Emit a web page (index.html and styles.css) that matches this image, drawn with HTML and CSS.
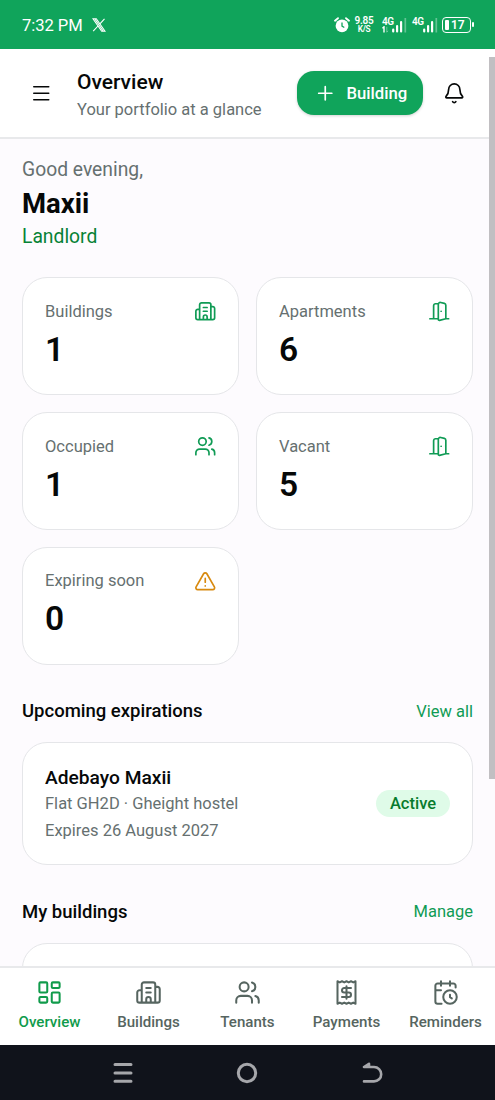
FILE: index.html
```html
<!DOCTYPE html>
<html lang="en">
<head>
<meta charset="utf-8">
<meta name="viewport" content="width=device-width, initial-scale=1">
<title>Overview</title>
<link rel="stylesheet" href="styles.css">
</head>
<body>
<svg class="sprite" aria-hidden="true">
  <symbol id="building" viewBox="0 0 24 24"><path d="M10 12h4M10 8h4M14 21v-3a2 2 0 0 0-4 0v3M6 10H4a2 2 0 0 0-2 2v7a2 2 0 0 0 2 2h16a2 2 0 0 0 2-2V9a2 2 0 0 0-2-2h-2M6 21V5a2 2 0 0 1 2-2h8a2 2 0 0 1 2 2v16"/></symbol>
  <symbol id="door" viewBox="0 0 24 24"><path d="M11 20H2M11 4.562v16.157a1 1 0 0 0 1.242.97L19 20V5.562a2 2 0 0 0-1.515-1.94l-4-1A2 2 0 0 0 11 4.561zM11 4H8a2 2 0 0 0-2 2v14M14 12h.01M22 20h-3"/></symbol>
  <symbol id="users" viewBox="0 0 24 24"><path d="M16 21v-2a4 4 0 0 0-4-4H6a4 4 0 0 0-4 4v2M16 3.128a4 4 0 0 1 0 7.744M22 21v-2a4 4 0 0 0-3-3.87"/><circle cx="9" cy="7" r="4"/></symbol>
  <symbol id="alert" viewBox="0 0 24 24"><path d="m21.73 18-8-14a2 2 0 0 0-3.48 0l-8 14A2 2 0 0 0 4 21h16a2 2 0 0 0 1.73-3M12 9v4M12 17h.01"/></symbol>
  <symbol id="dashboard" viewBox="0 0 24 24"><rect x="3" y="3" width="7" height="9" rx="1"/><rect x="14" y="3" width="7" height="5" rx="1"/><rect x="14" y="12" width="7" height="9" rx="1"/><rect x="3" y="16" width="7" height="5" rx="1"/></symbol>
  <symbol id="receipt" viewBox="0 0 24 24"><path d="M4 2v20l2-1 2 1 2-1 2 1 2-1 2 1 2-1 2 1V2l-2 1-2-1-2 1-2-1-2 1-2-1-2 1ZM16 8h-6a2 2 0 1 0 0 4h4a2 2 0 1 1 0 4H8M12 17.5v-11"/></symbol>
  <symbol id="calendar" viewBox="0 0 24 24"><path d="M16 14v2.2l1.6 1M16 2v4M21 7.5V6a2 2 0 0 0-2-2H5a2 2 0 0 0-2 2v14a2 2 0 0 0 2 2h3.5M3 10h5M8 2v4"/><circle cx="16" cy="16" r="6"/></symbol>
</svg>

<div class="phone">
  <div class="status">
    <span class="clock">7:32 PM</span>
    <svg class="x-logo" width="14" height="14" viewBox="0 0 14 14"><path d="M1 .8h3.3L13 13.2H9.7zM12.5.8 7.7 6.1M6 8 1.2 13.2M2.7 .8l8.6 12.4" /></svg>
    <svg class="alarm" width="16" height="16" viewBox="0 0 16 16"><circle cx="8" cy="8.8" r="6.4" fill="#fff"/><path d="M1 3.7 4 1.2M15 3.7l-3-2.5" stroke="#fff" stroke-width="1.8" stroke-linecap="round"/><path d="M8 5.4v3.7l2.3 1.4" fill="none" stroke="#10a45b" stroke-width="1.3"/></svg>
    <div class="speed"><span>9.85</span><span>K/S</span></div>
    <div class="signal signal-data">
      <div class="net"><span>4G</span><svg width="8" height="7" viewBox="0 0 8 7"><path d="M.4 2.3 2 .8v5.7" fill="none" stroke="#fff" stroke-width="1.4"/><path d="M4.8.8v5.4l1.1-1.4" fill="none" stroke="#fff" stroke-opacity=".4"/></svg></div>
      <svg class="bars" width="16" height="16" viewBox="0 0 16 16"><path d="M1.2 14.5v-2M5.1 14.5V9M9.1 14.5V5" stroke="#fff" stroke-width="2.2" stroke-linecap="round"/><path d="M13.3 15.5V1" stroke="#fff" stroke-opacity=".35" stroke-width="1.7"/></svg>
    </div>
    <div class="signal">
      <div class="net"><span>4G</span></div>
      <svg class="bars" width="16" height="16" viewBox="0 0 16 16"><path d="M1.2 14.5v-2M5.1 14.5V9M9.1 14.5V5" stroke="#fff" stroke-width="2.2" stroke-linecap="round"/><path d="M13.3 15.5V1" stroke="#fff" stroke-opacity=".35" stroke-width="1.7"/></svg>
    </div>
    <div class="battery"><i class="charge"></i><span>17</span></div>
  </div>

  <header class="header">
    <svg class="icon menu" viewBox="0 0 24 24"><path d="M4 5h16M4 12h16M4 19h16"/></svg>
    <div class="heading">
      <h1>Overview</h1>
      <p>Your portfolio at a glance</p>
    </div>
    <button class="add"><svg class="icon" viewBox="0 0 24 24"><path d="M5 12h14M12 5v14"/></svg><span>Building</span></button>
    <svg class="icon bell" viewBox="0 0 24 24"><path d="M10.268 21a2 2 0 0 0 3.464 0M3.262 15.326A1 1 0 0 0 4 17h16a1 1 0 0 0 .74-1.673C19.41 13.956 18 12.499 18 8A6 6 0 0 0 6 8c0 4.499-1.411 5.956-2.738 7.326"/></svg>
  </header>

  <main class="main">
    <section class="greeting">
      <p class="hello">Good evening,</p>
      <h2>Maxii</h2>
      <p class="role">Landlord</p>
    </section>

    <section class="stats">
      <div class="card stat"><div class="stat-top"><span>Buildings</span><svg class="icon"><use href="#building"/></svg></div><strong>1</strong></div>
      <div class="card stat"><div class="stat-top"><span>Apartments</span><svg class="icon"><use href="#door"/></svg></div><strong>6</strong></div>
      <div class="card stat"><div class="stat-top"><span>Occupied</span><svg class="icon"><use href="#users"/></svg></div><strong>1</strong></div>
      <div class="card stat"><div class="stat-top"><span>Vacant</span><svg class="icon"><use href="#door"/></svg></div><strong>5</strong></div>
      <div class="card stat warn"><div class="stat-top"><span>Expiring soon</span><svg class="icon"><use href="#alert"/></svg></div><strong>0</strong></div>
    </section>

    <div class="section-head"><h3>Upcoming expirations</h3><a>View all</a></div>
    <div class="card lease">
      <div class="lease-text">
        <p class="tenant">Adebayo Maxii</p>
        <p class="unit">Flat GH2D · Gheight hostel</p>
        <p class="expires">Expires 26 August 2027</p>
      </div>
      <span class="badge">Active</span>
    </div>

    <div class="section-head"><h3>My buildings</h3><a>Manage</a></div>
    <div class="card building-card"></div>
    <div class="scrollbar"></div>
  </main>

  <nav class="tabs">
    <a class="active"><svg class="icon"><use href="#dashboard"/></svg><span>Overview</span></a>
    <a><svg class="icon"><use href="#building"/></svg><span>Buildings</span></a>
    <a><svg class="icon"><use href="#users"/></svg><span>Tenants</span></a>
    <a><svg class="icon"><use href="#receipt"/></svg><span>Payments</span></a>
    <a><svg class="icon"><use href="#calendar"/></svg><span>Reminders</span></a>
  </nav>

  <div class="system">
    <svg width="20" height="22" viewBox="0 0 20 22"><path d="M2 2.5h16M2 11h16M2 19.3h16"/></svg>
    <svg width="22" height="22" viewBox="0 0 22 22"><circle cx="11" cy="11" r="8.7"/></svg>
    <svg width="22" height="22" viewBox="0 0 22 22"><path d="M3 5h10a7.2 7.2 0 0 1 0 14.4H3M8 1.8 3 5h5z"/></svg>
  </div>
</div>
</body>
</html>
```
FILE: styles.css
```css
* { box-sizing: border-box; }
body, h1, h2, h3, p { margin: 0; }
body { font-family: Roboto, "Liberation Sans", sans-serif; color: #060808; background: #fdfbfe; }
.sprite { position: absolute; width: 0; height: 0; }
.icon {
  width: 22.5px; height: 22.5px; flex: none; fill: none; stroke: currentColor;
  stroke-width: 1.8; stroke-linecap: round; stroke-linejoin: round;
}
.phone { position: relative; width: 495px; height: 1100px; display: flex; flex-direction: column; overflow: hidden; }

.status { height: 49px; flex: none; background: #10a45b; color: #fff; display: flex; align-items: center; padding: 0 20px 0 22px; }
.clock { font-size: 16.6px; width: 61px; white-space: nowrap; margin-top: 2px; letter-spacing: -.05px; }
.x-logo { margin-left: 9px; fill: none; stroke: #fff; stroke-width: 1.1; }
.alarm { margin-left: auto; }
.speed { width: 20px; margin-left: 4px; display: flex; flex-direction: column; align-items: center; font-size: 10px; line-height: 9px; font-weight: 600; letter-spacing: -.3px; }
.speed span:last-child { font-size: 8.3px; }
.signal { display: flex; align-items: flex-end; height: 16px; margin-left: 5px; width: 27px; }
.signal-data { margin-left: 8px; width: 25px; }
.net { width: 11px; height: 16px; flex: none; font-size: 10px; line-height: 9px; font-weight: 600; letter-spacing: -.5px; display: flex; flex-direction: column; }
.signal-data .net { width: 10px; }
.bars { flex: none; }
.battery { position: relative; width: 29px; height: 16px; margin: 0 4px 0 3px; border: 1.5px solid #fff; border-radius: 4px; display: flex; align-items: center; font-size: 12px; font-weight: 600; padding-left: 2px; gap: 2px; }
.battery::after { content: ""; position: absolute; right: -4px; top: 4px; width: 2px; height: 5px; background: #fff; border-radius: 1px; }
.charge { width: 4px; height: 10px; background: #fff; border-radius: 1px; }

.header { height: 90px; flex: none; background: #fff; border-bottom: 2px solid #e8e9eb; display: flex; align-items: center; padding: 0 30px; }
.heading { margin-left: 24.5px; width: 220px; padding-top: 6px; }
.menu { stroke-width: 1.6; }
h1 { font-size: 21px; line-height: 27px; font-weight: 500; }
.heading p { font-size: 16.5px; line-height: 27px; color: #667070; white-space: nowrap; }
.add { width: 126px; height: 44px; border: 0; border-radius: 17px; background: #10a45b; color: #fff; font: 500 16.7px Roboto, sans-serif; padding: 0 0 0 16.5px; display: flex; align-items: center; gap: 10.5px; box-shadow: 0 1px 3px rgba(0,0,0,.18); }
.bell { margin-left: 19.5px; }

.main { position: relative; flex: 1; min-height: 0; padding: 17px 22px 0; }
.greeting { height: 121.4px; }
.hello { font-size: 19.3px; line-height: 28px; color: #667070; }
h2 { font-size: 27.5px; line-height: 39px; font-weight: 700; }
.role { font-size: 19.3px; line-height: 27px; color: #078236; }
.card { background: #fff; border: 1.5px solid #e5e6e9; border-radius: 25px; }
.stats { display: grid; grid-template-columns: 217px 217px; grid-auto-rows: 118px; gap: 16.8px 17px; }
.stat { padding: 21px 22px 0; }
.stat-top { display: flex; align-items: center; justify-content: space-between; height: 24px; color: #667070; font-size: 16.5px; }
.stat-top .icon { color: #109b55; }
.warn .stat-top .icon { color: #d88a10; }
.stat strong { display: block; font-size: 33.5px; line-height: 38px; margin-top: 7.5px; font-weight: 600; }
.section-head { height: 77.5px; display: flex; align-items: center; justify-content: space-between; padding-top: 15.5px; }
h3 { font-size: 18.5px; font-weight: 500; }
.section-head a { font-size: 16.5px; color: #109b55; }
.lease { height: 123px; display: flex; align-items: center; justify-content: space-between; padding: 0 22px; }
.lease-text { padding-top: 1.5px; }
.tenant { font-size: 19.2px; line-height: 25px; font-weight: 500; }
.unit, .expires { font-size: 16.5px; line-height: 27px; color: #667070; }
.badge { width: 74px; height: 27px; border-radius: 14px; background: #dffbe8; color: #087b2d; font-size: 16.5px; font-weight: 500; display: grid; place-items: center; }
.building-card { height: 110px; }
.scrollbar { position: absolute; top: -82px; right: 0; width: 6px; height: 722px; background: #c1bfc2; }

.tabs { position: relative; height: 79px; flex: none; background: #fff; border-top: 2px solid #e8e9eb; display: grid; grid-template-columns: repeat(5, 99px); color: #566560; }
.tabs a { display: flex; flex-direction: column; align-items: center; padding-top: 11px; gap: 6px; font-size: 15.1px; line-height: 20px; font-weight: 500; }
.tabs .icon { width: 27px; height: 27px; }
.tabs .active { color: #109b4b; }
.system { position: relative; height: 55px; flex: none; background: #10131b; display: flex; align-items: center; justify-content: center; gap: 103px; }
.system svg { fill: none; stroke: #a6a7ab; stroke-width: 3; stroke-linecap: round; stroke-linejoin: round; }
.system svg:last-child { stroke-width: 2.6; }
```
